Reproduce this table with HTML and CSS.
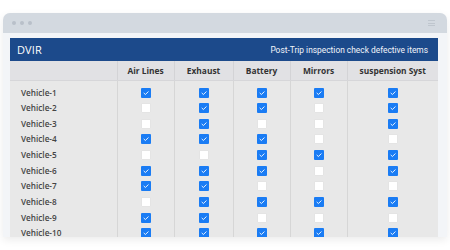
FILE: index.html
```html
<!DOCTYPE html>
<html>
<head>
<meta charset="utf-8">
<link rel="stylesheet" href="styles.css">
</head>
<body>
<div class="window">
  <div class="titlebar">
    <div class="dots"><span></span><span></span><span></span></div>
    <div class="menu"><span></span><span></span><span></span></div>
  </div>
  <div class="content">
    <div class="panel-head">
      <div class="title">DVIR</div>
      <div class="subtitle">Post-Trip inspection check defective items</div>
    </div>
    <table class="grid">
      <colgroup>
        <col class="c0"><col class="c1"><col class="c2"><col class="c3"><col class="c4"><col class="c5">
      </colgroup>
      <thead>
        <tr><th></th><th>Air Lines</th><th>Exhaust</th><th>Battery</th><th>Mirrors</th><th>suspension Syst</th></tr>
      </thead>
      <tbody id="rows"></tbody>
    </table>
  </div>
</div>
<script src="app.js"></script>
</body>
</html>
```
FILE: app.js
```js
const data = [
  [1,1,1,1,1],
  [0,1,1,0,1],
  [0,1,0,0,1],
  [1,1,1,0,0],
  [0,0,1,1,1],
  [1,1,1,0,1],
  [1,1,0,0,0],
  [0,1,1,1,1],
  [1,1,0,0,0],
  [1,1,1,1,1]
];
const tb = document.getElementById('rows');
const check = '<svg viewBox="0 0 10 10" width="10" height="10"><path d="M3 5.2 L4.4 6.5 L7.2 3.8" fill="none" stroke="#fff" stroke-width="0.9" stroke-linecap="round" stroke-linejoin="round"/></svg>';
data.forEach((r, i) => {
  const tr = document.createElement('tr');
  if (i === 0) tr.className = 'first';
  let html = '<td class="name">Vehicle-' + (i + 1) + '</td>';
  r.forEach(v => {
    html += '<td class="cell"><span class="box' + (v ? ' on' : '') + '">' + (v ? check : '') + '</span></td>';
  });
  tr.innerHTML = html;
  tb.appendChild(tr);
});
```
FILE: styles.css
```css
html, body {
  margin: 0;
  padding: 0;
  background: #ffffff;
  overflow: hidden;
}
body {
  width: 450px;
  height: 250px;
  font-family: "Open Sans", "Noto Sans", sans-serif;
}
.window {
  margin: 13px 0 0 3px;
  width: 444px;
  height: 224px;
  border-radius: 7px 7px 0 0;
  background: #f3f5f8;
  overflow: hidden;
  box-shadow: 0 3px 8px rgba(0, 0, 0, 0.08);
}
.titlebar {
  height: 20px;
  background: #d3d9e0;
  display: flex;
  align-items: center;
  justify-content: space-between;
  padding: 0 12px 0 9px;
}
.dots {
  display: flex;
  gap: 4px;
}
.dots span {
  width: 4px;
  height: 4px;
  border-radius: 50%;
  background: #b9c0c9;
}
.menu {
  display: flex;
  flex-direction: column;
  gap: 1.5px;
}
.menu span {
  width: 7px;
  height: 1px;
  background: #bfc6ce;
}
.content {
  padding: 5px 9px 0 7px;
}
.panel-head {
  height: 23px;
  background: #1c4a8b;
  display: flex;
  align-items: center;
  justify-content: space-between;
  padding: 0 10px 0 7px;
  color: #ffffff;
}
.title {
  font-size: 11px;
  font-weight: 400;
  letter-spacing: 0.1px;
}
.subtitle {
  font-family: Roboto, "Noto Sans", sans-serif;
  font-size: 8.4px;
  color: #f2f5fa;
}
.grid {
  width: 428px;
  border-collapse: collapse;
  table-layout: fixed;
  background: #e8e8e8;
}
.c0 { width: 107px; }
.c1 { width: 57px; }
.c2 { width: 59px; }
.c3 { width: 57px; }
.c4 { width: 57px; }
.c5 { width: 91px; }
th {
  height: 19px;
  padding: 0;
  background: #e1e1e4;
  font-size: 8.4px;
  line-height: 10px;
  font-weight: 700;
  color: #333333;
  text-align: center;
  border-left: 1px solid #d3d3d6;
  border-bottom: 1px solid #d6d6d9;
}
th:first-child, td:first-child { border-left: none; }
td {
  height: 15.67px;
  padding: 0;
  text-align: center;
  vertical-align: middle;
  border-left: 1px solid #d6d6d6;
  line-height: 10px;
}
tr.first td {
  height: 19.67px;
  padding-top: 4px;
  box-sizing: border-box;
}
td.cell {
  font-size: 0;
}
td.name {
  text-align: left;
  padding-left: 11px;
  font-size: 8.2px;
  font-weight: 600;
  color: #444444;
}
.box {
  display: block;
  margin: 0 auto;
  width: 10px;
  height: 10px;
  box-sizing: border-box;
  background: #ffffff;
  border: 1px solid #e4e4e4;
  border-radius: 1px;
}
.box.on {
  background: #1a7cf4;
  border: none;
}
.box svg { display: block; }
```
